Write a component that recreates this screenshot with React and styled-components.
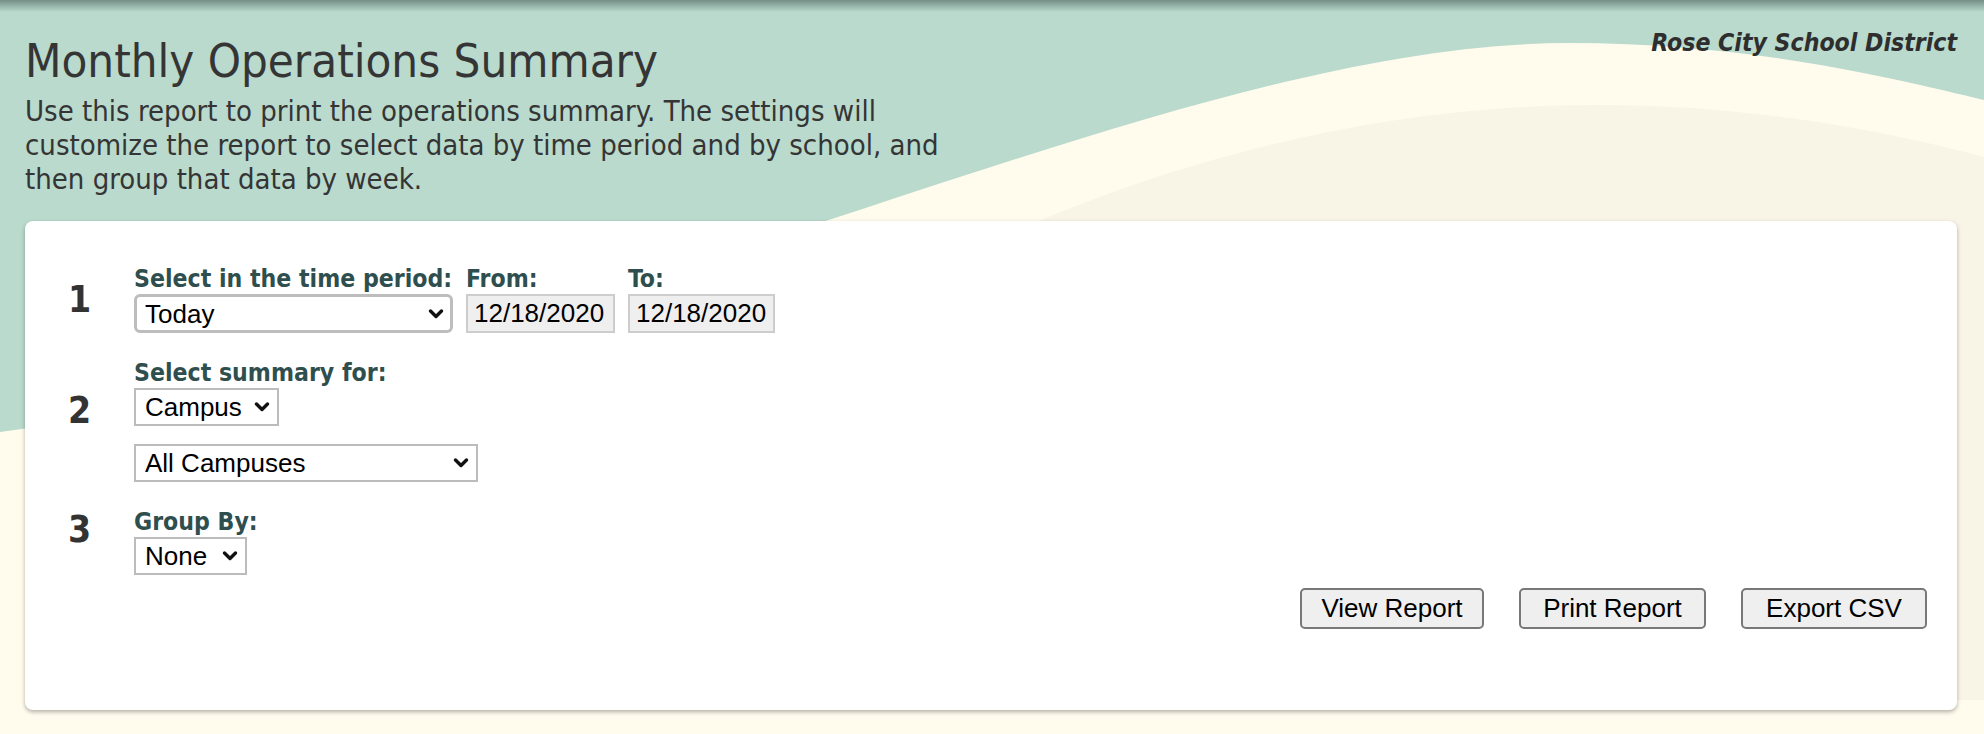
import styled, { createGlobalStyle } from "styled-components";

const GlobalStyle = createGlobalStyle`
  html, body {
    margin: 0;
    padding: 0;
  }

  body {
    background: #b9dacd;
    font-family: "DejaVu Sans Condensed", "DejaVu Sans", sans-serif;
    font-stretch: condensed;
    color: #333;
  }
`;

const Chevron = () => (
    <svg width="16" height="11" viewBox="0 0 16 11" aria-hidden="true">
        <polyline points="2.5,2.5 8,8 13.5,2.5" fill="none" stroke="#111" strokeWidth="3.4" strokeLinecap="round" strokeLinejoin="round" />
    </svg>
);

const Backdrop = () => (
    <Waves viewBox="0 0 1984 734" preserveAspectRatio="none" aria-hidden="true">
        <path d="M0,432 C640,345 1170,43 1570,43 C1755,43 1900,80 1984,100 L1984,734 L0,734 Z" fill="#fffbed" />
        <path d="M880,300 C1060,195 1320,105 1595,105 C1765,105 1900,135 1984,157 L1984,700 L880,700 Z" fill="#f8f5e6" />
    </Waves>
);

const SelectBox = ({ width, rounded, children }) => (
    <SelectWrap $width={width}>
        <Select $rounded={rounded}>{children}</Select>
        <Arrow><Chevron /></Arrow>
    </SelectWrap>
);

const App = () => {
    return (
        <>
        <GlobalStyle />
        <Page>
            <Backdrop />
            <Shade />
            <Content>
                <Header>
                    <Intro>
                        <Title>Monthly Operations Summary</Title>
                        <Description>
                            Use this report to print the operations summary. The settings will<br />
                            customize the report to select data by time period and by school, and<br />
                            then group that data by week.
                        </Description>
                    </Intro>
                    <District>Rose City School District</District>
                </Header>

                <Card>
                    <Steps>
                        <Step>
                            <StepNumber $top={15}>1</StepNumber>
                            <FieldRow>
                                <Field>
                                    <Label>Select in the time period:</Label>
                                    <SelectBox width={319} rounded>
                                        <option>Today</option>
                                    </SelectBox>
                                </Field>
                                <Field>
                                    <Label>From:</Label>
                                    <DateInput $width={149} readOnly value="12/18/2020" />
                                </Field>
                                <Field>
                                    <Label>To:</Label>
                                    <DateInput $width={147} readOnly value="12/18/2020" />
                                </Field>
                            </FieldRow>
                        </Step>

                        <Step>
                            <StepNumber $top={32}>2</StepNumber>
                            <Field>
                                <Label>Select summary for:</Label>
                                <SelectBox width={145}>
                                    <option>Campus</option>
                                </SelectBox>
                                <Spaced>
                                    <SelectBox width={344}>
                                        <option>All Campuses</option>
                                    </SelectBox>
                                </Spaced>
                            </Field>
                        </Step>

                        <Step>
                            <StepNumber $top={2}>3</StepNumber>
                            <Field>
                                <Label>Group By:</Label>
                                <SelectBox width={113}>
                                    <option>None</option>
                                </SelectBox>
                            </Field>
                        </Step>
                    </Steps>

                    <Actions>
                        <Button $width={184}>View Report</Button>
                        <Button $width={187}>Print Report</Button>
                        <Button $width={186}>Export CSV</Button>
                    </Actions>
                </Card>
            </Content>
        </Page>
        </>
    )
};


const Page = styled.div`
    position: relative;
    min-height: 100vh;
    overflow: hidden;
`

const Waves = styled.svg`
    position: absolute;
    inset: 0;
    width: 100%;
    height: 100%;
    z-index: 0;
`

const Shade = styled.div`
    position: absolute;
    top: 0;
    left: 0;
    right: 0;
    height: 12px;
    z-index: 2;
    background: linear-gradient(to bottom, rgba(60, 80, 75, 0.55), rgba(60, 80, 75, 0));
`

const Content = styled.div`
    position: relative;
    z-index: 1;
    padding: 0 27px 24px 25px;
`

const Header = styled.header`
    display: flex;
    justify-content: space-between;
    align-items: flex-start;
    height: 221px;
`

const Intro = styled.div`
    padding-top: 33px;
`

const Title = styled.h1`
    margin: 0;
    font-size: 47px;
    line-height: 56px;
    font-weight: normal;
    color: #353535;
`

const Description = styled.p`
    margin: 5px 0 0;
    font-size: 29px;
    line-height: 34px;
    color: #353535;
`

const District = styled.div`
    padding-top: 29px;
    font-size: 24.6px;
    line-height: 28px;
    font-weight: bold;
    font-style: italic;
    color: #2e2e2e;
`

const Card = styled.section`
    width: 100%;
    height: 489px;
    box-sizing: border-box;
    padding: 45px 30px 0 43px;
    background: #fff;
    border-radius: 8px;
    box-shadow: 0 2px 4px rgba(0, 0, 0, 0.3);
`

const Steps = styled.div`
    display: flex;
    flex-direction: column;
    gap: 27px;
`

const Step = styled.div`
    display: flex;
    align-items: flex-start;
`

const StepNumber = styled.div`
    width: 66px;
    flex-shrink: 0;
    margin-top: ${props => props.$top}px;
    font-size: 37px;
    line-height: 37px;
    font-weight: bold;
    color: #333;
`

const FieldRow = styled.div`
    display: flex;
    gap: 13px;
`

const Field = styled.div`
    display: flex;
    flex-direction: column;
    align-items: flex-start;
`

const Label = styled.label`
    font-size: 24.6px;
    line-height: 26px;
    font-weight: bold;
    color: #2f4f4f;
    margin-bottom: 2px;
`

const Spaced = styled.div`
    margin-top: 18px;
`

const SelectWrap = styled.span`
    position: relative;
    display: inline-flex;
    width: ${props => props.$width}px;
`

const Select = styled.select`
    appearance: none;
    width: 100%;
    height: ${props => props.$rounded ? 39 : 38}px;
    box-sizing: border-box;
    margin: 0;
    padding: 0 30px 0 ${props => props.$rounded ? 8 : 9}px;
    font-family: "Liberation Sans", Arial, sans-serif;
    font-size: 26px;
    color: #000;
    background: #fff;
    border: ${props => props.$rounded ? "3px solid #bdbdbd" : "2px solid #bcbcbc"};
    border-radius: ${props => props.$rounded ? "6px" : "0"};
    outline: none;
`

const Arrow = styled.span`
    position: absolute;
    right: 9px;
    top: 50%;
    transform: translateY(-50%);
    display: flex;
    pointer-events: none;
`

const DateInput = styled.input`
    width: ${props => props.$width}px;
    height: 39px;
    box-sizing: border-box;
    margin: 0;
    padding: 0 6px;
    font-family: "Liberation Sans", Arial, sans-serif;
    font-size: 26px;
    color: #000;
    background: #efefef;
    border: 2px solid #cdcdcd;
    outline: none;
`

const Actions = styled.div`
    display: flex;
    justify-content: flex-end;
    gap: 35px;
    margin-top: 13px;
`

const Button = styled.button`
    width: ${props => props.$width}px;
    height: 41px;
    padding: 0;
    font-family: "Liberation Sans", Arial, sans-serif;
    font-size: 26px;
    color: #000;
    background: #efefef;
    border: 2px solid #787878;
    border-radius: 5px;
    cursor: pointer;

    &:hover {
        background: #e5e5e5;
    }
`

export default App;
